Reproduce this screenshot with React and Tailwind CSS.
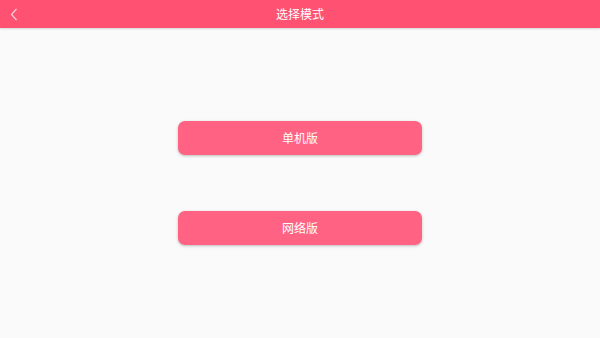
import { useState } from 'react';

export default function App() {
  const [mode, setMode] = useState(null);

  return (
    <div className="w-[600px] h-[338px] bg-[#fafafa] flex flex-col font-['Noto_Sans_CJK_SC',sans-serif]">
      <div className="h-[28px] bg-[#ff5273] flex items-center relative shadow-[0_1px_2px_rgba(0,0,0,0.15)]">
        <button className="absolute left-[8px] top-[7px] w-[12px] h-[14px] flex items-center justify-center">
          <svg width="8" height="13" viewBox="0 0 8 13" fill="none">
            <path d="M6.5 1 L1.5 6.5 L6.5 12" stroke="#ffd0da" strokeWidth="1.2" />
          </svg>
        </button>
        <h1 className="flex-1 text-center text-white text-[12px] leading-none">选择模式</h1>
      </div>

      <div className="flex flex-col items-center pt-[93px] gap-[56px]">
        {['单机版', '网络版'].map(label => (
          <button
            key={label}
            onClick={() => setMode(label)}
            className={`w-[244px] h-[34px] rounded-[7px] bg-[#ff6282] text-white text-[12px] shadow-[0_1px_3px_rgba(0,0,0,0.25)] ${mode === label ? 'bg-[#f5587a]' : ''}`}
          >
            {label}
          </button>
        ))}
      </div>
    </div>
  );
}
